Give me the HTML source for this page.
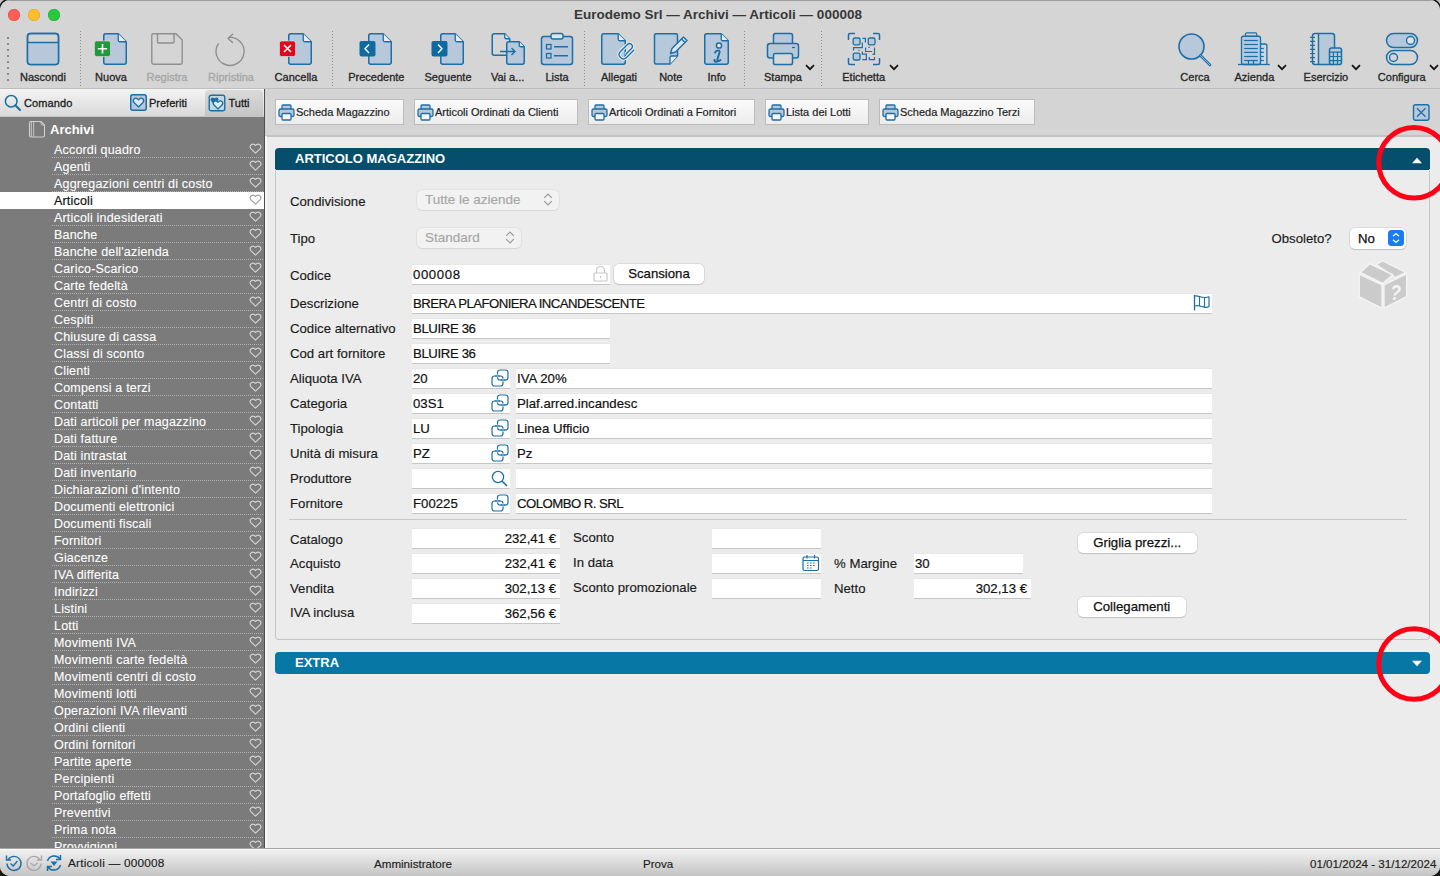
<!DOCTYPE html>
<html><head><meta charset="utf-8">
<style>
*{margin:0;padding:0;box-sizing:border-box}
html,body{width:1440px;height:876px;overflow:hidden;background:#1a1a1a}
body{font-family:"Liberation Sans",sans-serif;position:relative;color:#1e1e1e}
.a{position:absolute}
#win{position:absolute;left:0;top:0;width:1440px;height:876px;border-radius:10px;overflow:hidden;background:#ececec;box-shadow:0 0 0 1.5px #111}
#tb{left:0;top:0;width:1440px;height:89px;background:#d5d5d5;border-bottom:1px solid #bdbdbd}
#tb:before{content:"";position:absolute;left:0;top:0;right:0;height:1px;background:#9c9c9c}
.tl{width:12px;height:12px;border-radius:50%;top:9px}
.title{left:-2px;width:1440px;top:7px;text-align:center;font-weight:bold;font-size:13.5px;color:#383838;line-height:16px}
.lbl{font-size:11px;color:#262626;-webkit-text-stroke:0.3px #262626;top:70.5px;line-height:12px;text-align:center;width:100px}
.lbl.dis{-webkit-text-stroke:0.3px #a5a5a5}
.dis{color:#a5a5a5}
.sep{width:1px;border-left:2px dotted #8e8e8e}
.chev{width:9px;height:6px}
/* sidebar */
#sbh{left:0;top:89px;width:264px;height:28px;background:linear-gradient(#f4f4f4,#d9d9d9);border-bottom:1px solid #c4c4c4}
#sb{left:0;top:117px;width:264px;height:731px;background:#7b7b7b;overflow:hidden}
#sbb{left:264px;top:89px;width:1px;height:759px;background:#4e4e4e}
.row{position:absolute;left:0;width:264px;height:17px}
.row span{position:absolute;left:54px;top:2px;font-size:12.5px;color:#fff;line-height:14px;white-space:nowrap;letter-spacing:0.18px;-webkit-text-stroke:0.1px #fff}
.row i{position:absolute;left:52px;right:1px;bottom:0;height:1px;background:repeating-linear-gradient(90deg,#b2b2b2 0 1px,transparent 1px 2px)}
.row svg{position:absolute;left:248.5px;top:2px}
.row.sel{background:#fff}
.row.sel span{color:#111;-webkit-text-stroke:0.2px #111}
.row.sel i{display:none}
/* content */
#tabs{left:265px;top:89px;width:1175px;height:48px;background:#d4d4d4;border-bottom:2px solid #c3c3c3}
.tbtn{top:99px;height:26px;background:linear-gradient(#fbfbfb,#ececec);border:1px solid #bcbcbc;font-size:11px;color:#1e1e1e;line-height:24px;padding-left:20px;white-space:nowrap;-webkit-text-stroke:0.2px #1e1e1e}
.tbtn svg{position:absolute;left:2px;top:4px}
.hdr{left:275px;width:1155px;height:22px;color:#fff;font-weight:bold;font-size:13px;line-height:22px;padding-left:20px}
#box{left:275px;top:169px;width:1155px;height:471px;border:1px solid #c6c6c6;border-top:none;border-radius:0 0 4px 4px}
.L{font-size:13.2px;color:#1a1a1a;line-height:15px;white-space:nowrap;-webkit-text-stroke:0.15px #1a1a1a}
.fld{background:#fff;height:19px;box-shadow:0 1px 0 #c6c6c6,0 -0.5px 0 #e2e2e2}
.fld span{position:absolute;left:1px;top:3px;font-size:13.2px;line-height:14px;color:#111;white-space:nowrap;-webkit-text-stroke:0.2px #111}
.fld span.r{left:auto;right:4px}
.pop{height:20px;border-radius:5px;background:#f2f2f2;box-shadow:0 0 0 0.5px #d8d8d8,0 1px 1px #d4d4d4}
.btn{height:20px;border-radius:5px;background:#fff;box-shadow:0 0 0 0.5px #c8c8c8,0 1px 1px #c0c0c0;font-size:13.2px;line-height:20px;text-align:center;color:#111;-webkit-text-stroke:0.25px #111}
#status{left:0;top:848px;width:1440px;height:28px;background:linear-gradient(#f2f2f2,#c4c4c4);border-top:1px solid #a4a4a4;box-shadow:inset 0 1px 0 #fafafa}
#status .t{position:absolute;top:7.5px;font-size:11.8px;color:#1c1c1c;line-height:13px;white-space:nowrap;-webkit-text-stroke:0.15px #1c1c1c}
</style></head><body>
<div class="a" style="left:0;top:0;width:12px;height:12px;background:#c4c4c4"></div><div class="a" style="right:0;top:0;width:12px;height:12px;background:#c4c4c4"></div>
<div id="win">
<!-- TOOLBAR -->
<div id="tb" class="a">
  <div class="a tl" style="left:8px;background:#fe5f57;box-shadow:inset 0 0 0 0.5px #e0443e"></div>
  <div class="a tl" style="left:28px;background:#febc2e;box-shadow:inset 0 0 0 0.5px #dea123"></div>
  <div class="a tl" style="left:48px;background:#28c840;box-shadow:inset 0 0 0 0.5px #1aab29"></div>
  <div class="a title">Eurodemo Srl — Archivi — Articoli — 000008</div>
  <svg class="a" style="left:26px;top:32px" width="34" height="34" viewBox="0 0 34 34" ><rect x="1.5" y="1.5" width="31" height="31" rx="3" fill="none" stroke="#1b6fa6" stroke-width="1.5"/><path d="M1.5,10.5 H32.5 V30 Q32.5,32.5 30,32.5 H4 Q1.5,32.5 1.5,30 Z" fill="#b7c8da"/><rect x="1.5" y="1.5" width="31" height="31" rx="3" fill="none" stroke="#1b6fa6" stroke-width="1.5"/><line x1="1.5" y1="10.5" x2="32.5" y2="10.5" stroke="#1b6fa6" stroke-width="1.5"/></svg>
<svg class="a" style="left:94px;top:33px" width="34" height="33" viewBox="0 0 34 33" ><path d="M11.75,0.75 H24.25 L32.25,8.75 V29.25 Q32.25,31.25 30.25,31.25 H11.75 Q9.75,31.25 9.75,29.25 V2.75 Q9.75,0.75 11.75,0.75 Z" fill="#b7c8da" stroke="#1b6fa6" stroke-width="1.5" stroke-linejoin="round"/><path d="M24.25,0.75 V7.25 Q24.25,8.75 25.75,8.75 H32.25" fill="#e8ecf0" stroke="#1b6fa6" stroke-width="1.3"/><rect x="0.5" y="8" width="16" height="15.5" rx="2" fill="#1d9a3a" stroke="#e8d8e0" stroke-width="0.6"/><path d="M8.5,11 V20.5 M3.8,15.8 H13.2" stroke="#fff" stroke-width="1.6"/></svg>
<svg class="a" style="left:150px;top:32px" width="34" height="34" viewBox="0 0 34 34" ><path d="M3.5,1.8 H26 L32.2,8 V30.5 Q32.2,32.2 30.5,32.2 H3.5 Q1.8,32.2 1.8,30.5 V3.5 Q1.8,1.8 3.5,1.8 Z" fill="none" stroke="#8f8f8f" stroke-width="1.4"/><path d="M7.5,2 V10 Q7.5,11 8.5,11 H23 Q24,11 24,10 V2" fill="none" stroke="#8f8f8f" stroke-width="1.4"/></svg>
<svg class="a" style="left:214px;top:33px" width="34" height="34" viewBox="0 0 34 34" ><path d="M13.5,4.5 A14,14 0 1 1 3.5,10.5" fill="none" stroke="#8f8f8f" stroke-width="1.4" transform="translate(1,0)"/><path d="M19,0.8 L14.2,5.5 L19,10" fill="none" stroke="#8f8f8f" stroke-width="1.4"/></svg>
<svg class="a" style="left:279px;top:33px" width="34" height="33" viewBox="0 0 34 33" ><path d="M11.75,0.75 H24.25 L32.25,8.75 V29.25 Q32.25,31.25 30.25,31.25 H11.75 Q9.75,31.25 9.75,29.25 V2.75 Q9.75,0.75 11.75,0.75 Z" fill="#b7c8da" stroke="#1b6fa6" stroke-width="1.5" stroke-linejoin="round"/><path d="M24.25,0.75 V7.25 Q24.25,8.75 25.75,8.75 H32.25" fill="#e8ecf0" stroke="#1b6fa6" stroke-width="1.3"/><rect x="0.5" y="8" width="16" height="15.5" rx="2" fill="#e0061b" stroke="#d0f0f0" stroke-width="0.6"/><path d="M5,12 L12,19 M12,12 L5,19" stroke="#fff" stroke-width="1.6"/></svg>
<svg class="a" style="left:359px;top:33px" width="34" height="33" viewBox="0 0 34 33" ><path d="M11.75,0.75 H24.25 L32.25,8.75 V29.25 Q32.25,31.25 30.25,31.25 H11.75 Q9.75,31.25 9.75,29.25 V2.75 Q9.75,0.75 11.75,0.75 Z" fill="#b7c8da" stroke="#1b6fa6" stroke-width="1.5" stroke-linejoin="round"/><path d="M24.25,0.75 V7.25 Q24.25,8.75 25.75,8.75 H32.25" fill="#e8ecf0" stroke="#1b6fa6" stroke-width="1.3"/><rect x="0.5" y="8" width="16" height="15.5" rx="2" fill="#0e6aa0"/><path d="M10,11.5 L6,15.8 L10,20" fill="none" stroke="#fff" stroke-width="1.4"/></svg>
<svg class="a" style="left:431px;top:33px" width="34" height="33" viewBox="0 0 34 33" ><path d="M11.75,0.75 H24.25 L32.25,8.75 V29.25 Q32.25,31.25 30.25,31.25 H11.75 Q9.75,31.25 9.75,29.25 V2.75 Q9.75,0.75 11.75,0.75 Z" fill="#b7c8da" stroke="#1b6fa6" stroke-width="1.5" stroke-linejoin="round"/><path d="M24.25,0.75 V7.25 Q24.25,8.75 25.75,8.75 H32.25" fill="#e8ecf0" stroke="#1b6fa6" stroke-width="1.3"/><rect x="0.5" y="8" width="16" height="15.5" rx="2" fill="#0e6aa0"/><path d="M7,11.5 L11,15.8 L7,20" fill="none" stroke="#fff" stroke-width="1.4"/></svg>
<svg class="a" style="left:491px;top:32px" width="34" height="34" viewBox="0 0 34 34" ><g transform="translate(0.5,1)"><path d="M2.75,0.75 H13.25 L18.25,5.75 V20.25 Q18.25,22.25 16.25,22.25 H2.75 Q0.75,22.25 0.75,20.25 V2.75 Q0.75,0.75 2.75,0.75 Z" fill="none" stroke="#1b6fa6" stroke-width="1.5" stroke-linejoin="round"/><path d="M13.25,0.75 V4.25 Q13.25,5.75 14.75,5.75 H18.25" fill="#e8ecf0" stroke="#1b6fa6" stroke-width="1.3"/></g><g transform="translate(15,9)"><path d="M2.75,0.75 H13.25 L18.25,5.75 V21.25 Q18.25,23.25 16.25,23.25 H2.75 Q0.75,23.25 0.75,21.25 V2.75 Q0.75,0.75 2.75,0.75 Z" fill="#b7c8da" stroke="#1b6fa6" stroke-width="1.5" stroke-linejoin="round"/><path d="M13.25,0.75 V4.25 Q13.25,5.75 14.75,5.75 H18.25" fill="#e8ecf0" stroke="#1b6fa6" stroke-width="1.3"/></g><path d="M9,19.5 H24 M20.5,16 L24,19.5 L20.5,23" fill="none" stroke="#1b6fa6" stroke-width="1.4"/></svg>
<svg class="a" style="left:540px;top:32px" width="34" height="34" viewBox="0 0 34 34" ><rect x="1.5" y="4.5" width="31" height="28" rx="2.5" fill="#b7c8da" stroke="#1b6fa6" stroke-width="1.5"/><rect x="11" y="1.5" width="12" height="5.5" rx="2" fill="#dfe6ee" stroke="#1b6fa6" stroke-width="1.4"/><rect x="6.5" y="12.5" width="4.5" height="4.5" fill="none" stroke="#1b6fa6" stroke-width="1.3"/><rect x="6.5" y="21.5" width="4.5" height="4.5" fill="none" stroke="#1b6fa6" stroke-width="1.3"/><path d="M14,14.8 H28 M14,23.8 H28" stroke="#1b6fa6" stroke-width="1.4"/></svg>
<svg class="a" style="left:601px;top:32px" width="36" height="34" viewBox="0 0 36 34" ><g transform="translate(0,1)"><path d="M2.75,0.75 H17.25 L24.25,7.75 V29.25 Q24.25,31.25 22.25,31.25 H2.75 Q0.75,31.25 0.75,29.25 V2.75 Q0.75,0.75 2.75,0.75 Z" fill="#b7c8da" stroke="#1b6fa6" stroke-width="1.5" stroke-linejoin="round"/><path d="M17.25,0.75 V6.25 Q17.25,7.75 18.75,7.75 H24.25" fill="#e8ecf0" stroke="#1b6fa6" stroke-width="1.3"/></g><path d="M33,18 L25.5,25.5 Q22.5,28.5 19.5,25.5 Q16.5,22.5 19.5,19.5 L26.5,12.5 Q28.5,10.5 30.5,12.5 Q32.5,14.5 30.5,16.5 L24.5,22.5" fill="none" stroke="#e9edf1" stroke-width="3.4"/><path d="M33,18 L25.5,25.5 Q22.5,28.5 19.5,25.5 Q16.5,22.5 19.5,19.5 L26.5,12.5 Q28.5,10.5 30.5,12.5 Q32.5,14.5 30.5,16.5 L24.5,22.5" fill="none" stroke="#1b6fa6" stroke-width="1.4"/></svg>
<svg class="a" style="left:653px;top:32px" width="36" height="34" viewBox="0 0 36 34" ><path d="M3,1.8 H23 Q24.5,1.8 24.5,3.3 V24 L17,32 H3 Q1.5,32 1.5,30.5 V3.3 Q1.5,1.8 3,1.8 Z" fill="#b7c8da" stroke="#1b6fa6" stroke-width="1.5"/><path d="M17,32 V25.5 Q17,24 18.5,24 H24.5" fill="#e8ecf0" stroke="#1b6fa6" stroke-width="1.3"/><path d="M19,16.5 L30.5,5 L34,8.5 L22.5,20 L17.5,21.5 Z" fill="#dfe6ee" stroke="#1b6fa6" stroke-width="1.4" stroke-linejoin="round"/><path d="M28.5,7 L32,10.5" stroke="#1b6fa6" stroke-width="1.2"/></svg>
<svg class="a" style="left:704px;top:32px" width="26" height="34" viewBox="0 0 26 34" ><g transform="translate(0,1)"><path d="M2.75,0.75 H17.25 L24.25,7.75 V29.25 Q24.25,31.25 22.25,31.25 H2.75 Q0.75,31.25 0.75,29.25 V2.75 Q0.75,0.75 2.75,0.75 Z" fill="#b7c8da" stroke="#1b6fa6" stroke-width="1.5" stroke-linejoin="round"/><path d="M17.25,0.75 V6.25 Q17.25,7.75 18.75,7.75 H24.25" fill="#e8ecf0" stroke="#1b6fa6" stroke-width="1.3"/></g><circle cx="15" cy="13.5" r="2.6" fill="#e8ecf0" stroke="#1b6fa6" stroke-width="1.5"/><path d="M11,20.5 Q12,18.5 14,18.5 Q16,18.5 15.5,20.5 L13.5,27 Q13,29.5 15,29 L16.5,28 M13,29.5 Q10.5,30.5 10.5,28" fill="none" stroke="#1b6fa6" stroke-width="2" stroke-linejoin="round" stroke-linecap="round"/></svg>
<svg class="a" style="left:766px;top:32px" width="34" height="34" viewBox="0 0 34 34" ><rect x="7.5" y="1.5" width="19" height="11" rx="2" fill="#b7c8da" stroke="#1b6fa6" stroke-width="1.5"/><rect x="1.5" y="11.5" width="31" height="14.5" rx="2.5" fill="#b7c8da" stroke="#1b6fa6" stroke-width="1.5"/><rect x="7.5" y="21.5" width="19" height="11" rx="1.8" fill="#d8d8d8" stroke="#1b6fa6" stroke-width="1.5"/><path d="M26,15.5 H29" stroke="#1b6fa6" stroke-width="1.3"/></svg>
<svg class="a" style="left:847px;top:32px" width="34" height="34" viewBox="0 0 34 34" ><path d="M1.5,8 V3 Q1.5,1.5 3,1.5 H8 M26,1.5 H31 Q32.5,1.5 32.5,3 V8 M32.5,26 V31 Q32.5,32.5 31,32.5 H26 M8,32.5 H3 Q1.5,32.5 1.5,31 V26" fill="none" stroke="#1b6fa6" stroke-width="1.5"/><rect x="6.2" y="6" width="6.8" height="6.8" rx="1.6" fill="#b7c8da" stroke="#1b6fa6" stroke-width="1.3"/><rect x="21.2" y="6" width="6.8" height="6.8" rx="1.6" fill="#b7c8da" stroke="#1b6fa6" stroke-width="1.3"/><rect x="6.2" y="21.2" width="6.8" height="6.8" rx="1.6" fill="#b7c8da" stroke="#1b6fa6" stroke-width="1.3"/><path d="M15.5,6.3 H18.4 V10.4 M15.3,10.4 V15.6 H6.5 V18.5 M18.6,15.4 V19.5 H25.1 M27.5,15.4 V22.4 H25.4 M15.3,19.5 V22.1 H19.4 V27.6 H15.3 M22.3,25 V27.6 H27.5 V25" fill="none" stroke="#1b6fa6" stroke-width="1.2"/><path d="M11.3,18.3 h1.3 M21.3,15.4 h1.3" stroke="#1b6fa6" stroke-width="1.2"/></svg>
<svg class="a" style="left:1177px;top:32px" width="36" height="35" viewBox="0 0 36 35" ><circle cx="14.5" cy="14.5" r="12.5" fill="#b7c8da" stroke="#1b6fa6" stroke-width="1.6"/><path d="M23.5,23.5 L33,33" stroke="#1b6fa6" stroke-width="2.6" stroke-linecap="round"/><path d="M23.5,23.5 L33,33" stroke="#b7c8da" stroke-width="0.8" stroke-linecap="round"/></svg>
<svg class="a" style="left:1237px;top:32px" width="35" height="34" viewBox="0 0 35 34" ><rect x="4.5" y="4.25" width="19" height="28.25" rx="2" fill="#b7c8da" stroke="#1b6fa6" stroke-width="1.3"/><rect x="8.3" y="0.9" width="11.5" height="3.4" rx="1.5" fill="none" stroke="#1b6fa6" stroke-width="1.2"/><path d="M23.7,12 H28 Q29.9,12 29.9,14 V32.5" fill="none" stroke="#1b6fa6" stroke-width="1.3"/><path d="M1,32.5 H32.8" stroke="#1b6fa6" stroke-width="1.3"/><path d="M7.1,8.5 H20.8" stroke="#1b6fa6" stroke-width="1.2"/><path d="M7.1,12.5 H20.8" stroke="#1b6fa6" stroke-width="1.2"/><path d="M7.1,16.5 H20.8" stroke="#1b6fa6" stroke-width="1.2"/><path d="M7.1,20.4 H20.8" stroke="#1b6fa6" stroke-width="1.2"/><path d="M7.1,24.5 H20.8" stroke="#1b6fa6" stroke-width="1.2"/><path d="M7.1,28.5 H20.8" stroke="#1b6fa6" stroke-width="1.2"/><path d="M23.7,16.5 H26.8" stroke="#1b6fa6" stroke-width="1.2"/><path d="M23.7,20.4 H26.8" stroke="#1b6fa6" stroke-width="1.2"/><path d="M23.7,24.5 H26.8" stroke="#1b6fa6" stroke-width="1.2"/><path d="M23.7,28.5 H26.8" stroke="#1b6fa6" stroke-width="1.2"/><path d="M11.5,28.5 V32.5 M16.5,28.5 V32.5" stroke="#1b6fa6" stroke-width="1.2"/></svg>
<svg class="a" style="left:1309px;top:32px" width="35" height="35" viewBox="0 0 35 35" ><path d="M9.5,1.5 H23.5 Q25.5,1.5 25.5,3.5 V30.5 Q25.5,32.5 23.5,32.5 H9.5 Z" fill="#b7c8da"/><rect x="3.5" y="1.5" width="22" height="31" rx="2.5" fill="none" stroke="#1b6fa6" stroke-width="1.5"/><path d="M9.5,1.5 V32.5" stroke="#1b6fa6" stroke-width="1.4"/><path d="M1,5.3 H6" stroke="#1b6fa6" stroke-width="1.2"/><path d="M1,9.35 H6" stroke="#1b6fa6" stroke-width="1.2"/><path d="M1,13.4 H6" stroke="#1b6fa6" stroke-width="1.2"/><path d="M1,17.45 H6" stroke="#1b6fa6" stroke-width="1.2"/><path d="M1,21.5 H6" stroke="#1b6fa6" stroke-width="1.2"/><path d="M1,25.55 H6" stroke="#1b6fa6" stroke-width="1.2"/><path d="M1,29.6 H6" stroke="#1b6fa6" stroke-width="1.2"/><rect x="20.5" y="16" width="12" height="16.5" rx="2" fill="#b7c8da" stroke="#1b6fa6" stroke-width="1.5"/><path d="M20.5,20.2 H32.5 M20.5,24.5 H32.5 M20.5,28.6 H32.5 M24.4,20.2 V32.5 M28.5,20.2 V32.5" stroke="#1b6fa6" stroke-width="1.2"/></svg>
<svg class="a" style="left:1385px;top:32px" width="35" height="35" viewBox="0 0 35 35" ><rect x="1.5" y="1.5" width="31" height="14" rx="7" fill="#b7c8da" stroke="#1b6fa6" stroke-width="1.5"/><circle cx="25.5" cy="8.5" r="4" fill="#dde3ea" stroke="#1b6fa6" stroke-width="1.4"/><rect x="1.5" y="18.5" width="31" height="14" rx="7" fill="none" stroke="#1b6fa6" stroke-width="1.5"/><circle cx="8.5" cy="25.5" r="4" fill="none" stroke="#1b6fa6" stroke-width="1.4"/></svg>
<svg class="a" style="left:804.7px;top:63.5px" width="10" height="7" viewBox="0 0 10 7" ><path d="M1,1.2 L5,5.2 L9,1.2" fill="none" stroke="#111" stroke-width="1.7"/></svg>
<svg class="a" style="left:888.6px;top:63.5px" width="10" height="7" viewBox="0 0 10 7" ><path d="M1,1.2 L5,5.2 L9,1.2" fill="none" stroke="#111" stroke-width="1.7"/></svg>
<svg class="a" style="left:1276.7px;top:63.5px" width="10" height="7" viewBox="0 0 10 7" ><path d="M1,1.2 L5,5.2 L9,1.2" fill="none" stroke="#111" stroke-width="1.7"/></svg>
<svg class="a" style="left:1350.8px;top:63.5px" width="10" height="7" viewBox="0 0 10 7" ><path d="M1,1.2 L5,5.2 L9,1.2" fill="none" stroke="#111" stroke-width="1.7"/></svg>
<svg class="a" style="left:1429.4px;top:63.5px" width="10" height="7" viewBox="0 0 10 7" ><path d="M1,1.2 L5,5.2 L9,1.2" fill="none" stroke="#111" stroke-width="1.7"/></svg>
<div class="a" style="left:7px;top:37px;width:2px;height:46px;background:repeating-linear-gradient(#8a8a8a 0 2px,transparent 2px 6px)"></div>
<div class="a" style="left:80px;top:31px;width:1px;height:56px;background:repeating-linear-gradient(#8f8f8f 0 1px,transparent 1px 3px)"></div>
<div class="a" style="left:332px;top:31px;width:1px;height:56px;background:repeating-linear-gradient(#8f8f8f 0 1px,transparent 1px 3px)"></div>
<div class="a" style="left:584px;top:31px;width:1px;height:56px;background:repeating-linear-gradient(#8f8f8f 0 1px,transparent 1px 3px)"></div>
<div class="a" style="left:744px;top:31px;width:1px;height:56px;background:repeating-linear-gradient(#8f8f8f 0 1px,transparent 1px 3px)"></div>
<div class="a" style="left:821px;top:31px;width:1px;height:56px;background:repeating-linear-gradient(#8f8f8f 0 1px,transparent 1px 3px)"></div>
<div class="a lbl" style="left:-7px">Nascondi</div>
<div class="a lbl" style="left:61px">Nuova</div>
<div class="a lbl dis" style="left:117px">Registra</div>
<div class="a lbl dis" style="left:181px">Ripristina</div>
<div class="a lbl" style="left:246px">Cancella</div>
<div class="a lbl" style="left:326.3px">Precedente</div>
<div class="a lbl" style="left:398px">Seguente</div>
<div class="a lbl" style="left:457.6px">Vai a...</div>
<div class="a lbl" style="left:507px">Lista</div>
<div class="a lbl" style="left:569px">Allegati</div>
<div class="a lbl" style="left:620.8px">Note</div>
<div class="a lbl" style="left:666.7px">Info</div>
<div class="a lbl" style="left:733px">Stampa</div>
<div class="a lbl" style="left:813.7px">Etichetta</div>
<div class="a lbl" style="left:1145px">Cerca</div>
<div class="a lbl" style="left:1204.4px">Azienda</div>
<div class="a lbl" style="left:1275.9px">Esercizio</div>
<div class="a lbl" style="left:1351.7px">Configura</div>
</div>
<!-- SIDEBAR -->
<div id="sbh" class="a"><svg class="a" style="left:4px;top:5px" width="18" height="18"><circle cx="7.2" cy="7.2" r="5.8" fill="none" stroke="#1b6fa6" stroke-width="1.5"/><path d="M11.3,11.3 L16,16" stroke="#1b6fa6" stroke-width="2" stroke-linecap="round"/></svg>
<div class="a" style="left:24px;top:8px;font-size:11px;color:#1a1a1a;line-height:12px;-webkit-text-stroke:0.3px #1a1a1a;letter-spacing:0.1px">Comando</div>
<svg class="a" style="left:130px;top:5px" width="17" height="17"><rect x="0.75" y="0.75" width="15.5" height="15.5" rx="2" fill="#b7c8da" stroke="#1b6fa6" stroke-width="1.5"/><path d="M8.5,13 L4,8.5 Q2.5,6.5 4,5 Q5.8,3.3 7.6,5 L8.5,5.9 L9.4,5 Q11.2,3.3 13,5 Q14.5,6.5 13,8.5 Z" fill="#dfe7ef" stroke="#1b6fa6" stroke-width="1.3" stroke-linejoin="round"/></svg>
<div class="a" style="left:149px;top:8px;font-size:11px;color:#1a1a1a;line-height:12px;-webkit-text-stroke:0.3px #1a1a1a">Preferiti</div>
<div class="a" style="left:205px;top:1px;width:58px;height:27px;background:linear-gradient(#dadada,#c4c4c4);border-radius:4px 4px 0 0"></div>
<svg class="a" style="left:208px;top:5px" width="18" height="18"><rect x="1.25" y="1.25" width="15.5" height="15.5" rx="2" fill="#c9d6e3" stroke="#1b6fa6" stroke-width="1.4"/><path d="M6.5,10.5 L3,7 Q1.8,5.3 3.2,4 Q4.6,2.8 6,4 L6.5,4.5 L7,4 Q8.4,2.8 9.8,4 Q11.2,5.3 10,7 Z" fill="#1b6fa6"/><path d="M10,15 L5.8,10.8 Q4.5,9 6,7.6 Q7.6,6.2 9.2,7.6 L10,8.4 L10.8,7.6 Q12.4,6.2 14,7.6 Q15.5,9 14.2,10.8 Z" fill="#e4ebf2" stroke="#1b6fa6" stroke-width="1.3" stroke-linejoin="round"/></svg>
<div class="a" style="left:228.5px;top:8px;font-size:11px;color:#1a1a1a;line-height:12px;-webkit-text-stroke:0.3px #1a1a1a">Tutti</div></div>
<div id="sb" class="a"><svg class="a" style="left:28px;top:3px" width="18" height="19"><path d="M1.5,3 Q1.5,1.5 3,1.5 H13 L16.5,5 V15.5 Q16.5,17 15,17 H3 Q1.5,17 1.5,15.5 Z" fill="none" stroke="#d0d0d0" stroke-width="1.1"/><path d="M3.3,1.8 V16.8 M5.7,1.8 V16.8" stroke="#d0d0d0" stroke-width="0.9"/><path d="M13,1.5 V3.5 Q13,5 14.5,5 H16.5" fill="none" stroke="#d0d0d0" stroke-width="0.9"/></svg>
<div class="a" style="left:50px;top:5px;font-size:13px;font-weight:bold;color:#fff;line-height:15px">Archivi</div>
<div class="row" style="top:24px"><span>Accordi quadro</span><i></i><svg width="13" height="12"><path d="M6,9.6 L1.3,5.1 Q0.1,3.6 0.9,2.1 Q2.1,0.3 4.2,0.7 Q5.2,1 6,2 Q6.8,1 7.8,0.7 Q9.9,0.3 11.1,2.1 Q11.9,3.6 10.7,5.1 Z" transform="translate(0.5,0.5)" fill="none" stroke="#d6d6d6" stroke-width="1.1" stroke-linejoin="round"/></svg></div>
<div class="row" style="top:41px"><span>Agenti</span><i></i><svg width="13" height="12"><path d="M6,9.6 L1.3,5.1 Q0.1,3.6 0.9,2.1 Q2.1,0.3 4.2,0.7 Q5.2,1 6,2 Q6.8,1 7.8,0.7 Q9.9,0.3 11.1,2.1 Q11.9,3.6 10.7,5.1 Z" transform="translate(0.5,0.5)" fill="none" stroke="#d6d6d6" stroke-width="1.1" stroke-linejoin="round"/></svg></div>
<div class="row" style="top:58px"><span>Aggregazioni centri di costo</span><i></i><svg width="13" height="12"><path d="M6,9.6 L1.3,5.1 Q0.1,3.6 0.9,2.1 Q2.1,0.3 4.2,0.7 Q5.2,1 6,2 Q6.8,1 7.8,0.7 Q9.9,0.3 11.1,2.1 Q11.9,3.6 10.7,5.1 Z" transform="translate(0.5,0.5)" fill="none" stroke="#d6d6d6" stroke-width="1.1" stroke-linejoin="round"/></svg></div>
<div class="row sel" style="top:75px"><span>Articoli</span><i></i><svg width="13" height="12"><path d="M6,9.6 L1.3,5.1 Q0.1,3.6 0.9,2.1 Q2.1,0.3 4.2,0.7 Q5.2,1 6,2 Q6.8,1 7.8,0.7 Q9.9,0.3 11.1,2.1 Q11.9,3.6 10.7,5.1 Z" transform="translate(0.5,0.5)" fill="none" stroke="#9a9a9a" stroke-width="1.1" stroke-linejoin="round"/></svg></div>
<div class="row" style="top:92px"><span>Articoli indesiderati</span><i></i><svg width="13" height="12"><path d="M6,9.6 L1.3,5.1 Q0.1,3.6 0.9,2.1 Q2.1,0.3 4.2,0.7 Q5.2,1 6,2 Q6.8,1 7.8,0.7 Q9.9,0.3 11.1,2.1 Q11.9,3.6 10.7,5.1 Z" transform="translate(0.5,0.5)" fill="none" stroke="#d6d6d6" stroke-width="1.1" stroke-linejoin="round"/></svg></div>
<div class="row" style="top:109px"><span>Banche</span><i></i><svg width="13" height="12"><path d="M6,9.6 L1.3,5.1 Q0.1,3.6 0.9,2.1 Q2.1,0.3 4.2,0.7 Q5.2,1 6,2 Q6.8,1 7.8,0.7 Q9.9,0.3 11.1,2.1 Q11.9,3.6 10.7,5.1 Z" transform="translate(0.5,0.5)" fill="none" stroke="#d6d6d6" stroke-width="1.1" stroke-linejoin="round"/></svg></div>
<div class="row" style="top:126px"><span>Banche dell'azienda</span><i></i><svg width="13" height="12"><path d="M6,9.6 L1.3,5.1 Q0.1,3.6 0.9,2.1 Q2.1,0.3 4.2,0.7 Q5.2,1 6,2 Q6.8,1 7.8,0.7 Q9.9,0.3 11.1,2.1 Q11.9,3.6 10.7,5.1 Z" transform="translate(0.5,0.5)" fill="none" stroke="#d6d6d6" stroke-width="1.1" stroke-linejoin="round"/></svg></div>
<div class="row" style="top:143px"><span>Carico-Scarico</span><i></i><svg width="13" height="12"><path d="M6,9.6 L1.3,5.1 Q0.1,3.6 0.9,2.1 Q2.1,0.3 4.2,0.7 Q5.2,1 6,2 Q6.8,1 7.8,0.7 Q9.9,0.3 11.1,2.1 Q11.9,3.6 10.7,5.1 Z" transform="translate(0.5,0.5)" fill="none" stroke="#d6d6d6" stroke-width="1.1" stroke-linejoin="round"/></svg></div>
<div class="row" style="top:160px"><span>Carte fedeltà</span><i></i><svg width="13" height="12"><path d="M6,9.6 L1.3,5.1 Q0.1,3.6 0.9,2.1 Q2.1,0.3 4.2,0.7 Q5.2,1 6,2 Q6.8,1 7.8,0.7 Q9.9,0.3 11.1,2.1 Q11.9,3.6 10.7,5.1 Z" transform="translate(0.5,0.5)" fill="none" stroke="#d6d6d6" stroke-width="1.1" stroke-linejoin="round"/></svg></div>
<div class="row" style="top:177px"><span>Centri di costo</span><i></i><svg width="13" height="12"><path d="M6,9.6 L1.3,5.1 Q0.1,3.6 0.9,2.1 Q2.1,0.3 4.2,0.7 Q5.2,1 6,2 Q6.8,1 7.8,0.7 Q9.9,0.3 11.1,2.1 Q11.9,3.6 10.7,5.1 Z" transform="translate(0.5,0.5)" fill="none" stroke="#d6d6d6" stroke-width="1.1" stroke-linejoin="round"/></svg></div>
<div class="row" style="top:194px"><span>Cespiti</span><i></i><svg width="13" height="12"><path d="M6,9.6 L1.3,5.1 Q0.1,3.6 0.9,2.1 Q2.1,0.3 4.2,0.7 Q5.2,1 6,2 Q6.8,1 7.8,0.7 Q9.9,0.3 11.1,2.1 Q11.9,3.6 10.7,5.1 Z" transform="translate(0.5,0.5)" fill="none" stroke="#d6d6d6" stroke-width="1.1" stroke-linejoin="round"/></svg></div>
<div class="row" style="top:211px"><span>Chiusure di cassa</span><i></i><svg width="13" height="12"><path d="M6,9.6 L1.3,5.1 Q0.1,3.6 0.9,2.1 Q2.1,0.3 4.2,0.7 Q5.2,1 6,2 Q6.8,1 7.8,0.7 Q9.9,0.3 11.1,2.1 Q11.9,3.6 10.7,5.1 Z" transform="translate(0.5,0.5)" fill="none" stroke="#d6d6d6" stroke-width="1.1" stroke-linejoin="round"/></svg></div>
<div class="row" style="top:228px"><span>Classi di sconto</span><i></i><svg width="13" height="12"><path d="M6,9.6 L1.3,5.1 Q0.1,3.6 0.9,2.1 Q2.1,0.3 4.2,0.7 Q5.2,1 6,2 Q6.8,1 7.8,0.7 Q9.9,0.3 11.1,2.1 Q11.9,3.6 10.7,5.1 Z" transform="translate(0.5,0.5)" fill="none" stroke="#d6d6d6" stroke-width="1.1" stroke-linejoin="round"/></svg></div>
<div class="row" style="top:245px"><span>Clienti</span><i></i><svg width="13" height="12"><path d="M6,9.6 L1.3,5.1 Q0.1,3.6 0.9,2.1 Q2.1,0.3 4.2,0.7 Q5.2,1 6,2 Q6.8,1 7.8,0.7 Q9.9,0.3 11.1,2.1 Q11.9,3.6 10.7,5.1 Z" transform="translate(0.5,0.5)" fill="none" stroke="#d6d6d6" stroke-width="1.1" stroke-linejoin="round"/></svg></div>
<div class="row" style="top:262px"><span>Compensi a terzi</span><i></i><svg width="13" height="12"><path d="M6,9.6 L1.3,5.1 Q0.1,3.6 0.9,2.1 Q2.1,0.3 4.2,0.7 Q5.2,1 6,2 Q6.8,1 7.8,0.7 Q9.9,0.3 11.1,2.1 Q11.9,3.6 10.7,5.1 Z" transform="translate(0.5,0.5)" fill="none" stroke="#d6d6d6" stroke-width="1.1" stroke-linejoin="round"/></svg></div>
<div class="row" style="top:279px"><span>Contatti</span><i></i><svg width="13" height="12"><path d="M6,9.6 L1.3,5.1 Q0.1,3.6 0.9,2.1 Q2.1,0.3 4.2,0.7 Q5.2,1 6,2 Q6.8,1 7.8,0.7 Q9.9,0.3 11.1,2.1 Q11.9,3.6 10.7,5.1 Z" transform="translate(0.5,0.5)" fill="none" stroke="#d6d6d6" stroke-width="1.1" stroke-linejoin="round"/></svg></div>
<div class="row" style="top:296px"><span>Dati articoli per magazzino</span><i></i><svg width="13" height="12"><path d="M6,9.6 L1.3,5.1 Q0.1,3.6 0.9,2.1 Q2.1,0.3 4.2,0.7 Q5.2,1 6,2 Q6.8,1 7.8,0.7 Q9.9,0.3 11.1,2.1 Q11.9,3.6 10.7,5.1 Z" transform="translate(0.5,0.5)" fill="none" stroke="#d6d6d6" stroke-width="1.1" stroke-linejoin="round"/></svg></div>
<div class="row" style="top:313px"><span>Dati fatture</span><i></i><svg width="13" height="12"><path d="M6,9.6 L1.3,5.1 Q0.1,3.6 0.9,2.1 Q2.1,0.3 4.2,0.7 Q5.2,1 6,2 Q6.8,1 7.8,0.7 Q9.9,0.3 11.1,2.1 Q11.9,3.6 10.7,5.1 Z" transform="translate(0.5,0.5)" fill="none" stroke="#d6d6d6" stroke-width="1.1" stroke-linejoin="round"/></svg></div>
<div class="row" style="top:330px"><span>Dati intrastat</span><i></i><svg width="13" height="12"><path d="M6,9.6 L1.3,5.1 Q0.1,3.6 0.9,2.1 Q2.1,0.3 4.2,0.7 Q5.2,1 6,2 Q6.8,1 7.8,0.7 Q9.9,0.3 11.1,2.1 Q11.9,3.6 10.7,5.1 Z" transform="translate(0.5,0.5)" fill="none" stroke="#d6d6d6" stroke-width="1.1" stroke-linejoin="round"/></svg></div>
<div class="row" style="top:347px"><span>Dati inventario</span><i></i><svg width="13" height="12"><path d="M6,9.6 L1.3,5.1 Q0.1,3.6 0.9,2.1 Q2.1,0.3 4.2,0.7 Q5.2,1 6,2 Q6.8,1 7.8,0.7 Q9.9,0.3 11.1,2.1 Q11.9,3.6 10.7,5.1 Z" transform="translate(0.5,0.5)" fill="none" stroke="#d6d6d6" stroke-width="1.1" stroke-linejoin="round"/></svg></div>
<div class="row" style="top:364px"><span>Dichiarazioni d'intento</span><i></i><svg width="13" height="12"><path d="M6,9.6 L1.3,5.1 Q0.1,3.6 0.9,2.1 Q2.1,0.3 4.2,0.7 Q5.2,1 6,2 Q6.8,1 7.8,0.7 Q9.9,0.3 11.1,2.1 Q11.9,3.6 10.7,5.1 Z" transform="translate(0.5,0.5)" fill="none" stroke="#d6d6d6" stroke-width="1.1" stroke-linejoin="round"/></svg></div>
<div class="row" style="top:381px"><span>Documenti elettronici</span><i></i><svg width="13" height="12"><path d="M6,9.6 L1.3,5.1 Q0.1,3.6 0.9,2.1 Q2.1,0.3 4.2,0.7 Q5.2,1 6,2 Q6.8,1 7.8,0.7 Q9.9,0.3 11.1,2.1 Q11.9,3.6 10.7,5.1 Z" transform="translate(0.5,0.5)" fill="none" stroke="#d6d6d6" stroke-width="1.1" stroke-linejoin="round"/></svg></div>
<div class="row" style="top:398px"><span>Documenti fiscali</span><i></i><svg width="13" height="12"><path d="M6,9.6 L1.3,5.1 Q0.1,3.6 0.9,2.1 Q2.1,0.3 4.2,0.7 Q5.2,1 6,2 Q6.8,1 7.8,0.7 Q9.9,0.3 11.1,2.1 Q11.9,3.6 10.7,5.1 Z" transform="translate(0.5,0.5)" fill="none" stroke="#d6d6d6" stroke-width="1.1" stroke-linejoin="round"/></svg></div>
<div class="row" style="top:415px"><span>Fornitori</span><i></i><svg width="13" height="12"><path d="M6,9.6 L1.3,5.1 Q0.1,3.6 0.9,2.1 Q2.1,0.3 4.2,0.7 Q5.2,1 6,2 Q6.8,1 7.8,0.7 Q9.9,0.3 11.1,2.1 Q11.9,3.6 10.7,5.1 Z" transform="translate(0.5,0.5)" fill="none" stroke="#d6d6d6" stroke-width="1.1" stroke-linejoin="round"/></svg></div>
<div class="row" style="top:432px"><span>Giacenze</span><i></i><svg width="13" height="12"><path d="M6,9.6 L1.3,5.1 Q0.1,3.6 0.9,2.1 Q2.1,0.3 4.2,0.7 Q5.2,1 6,2 Q6.8,1 7.8,0.7 Q9.9,0.3 11.1,2.1 Q11.9,3.6 10.7,5.1 Z" transform="translate(0.5,0.5)" fill="none" stroke="#d6d6d6" stroke-width="1.1" stroke-linejoin="round"/></svg></div>
<div class="row" style="top:449px"><span>IVA differita</span><i></i><svg width="13" height="12"><path d="M6,9.6 L1.3,5.1 Q0.1,3.6 0.9,2.1 Q2.1,0.3 4.2,0.7 Q5.2,1 6,2 Q6.8,1 7.8,0.7 Q9.9,0.3 11.1,2.1 Q11.9,3.6 10.7,5.1 Z" transform="translate(0.5,0.5)" fill="none" stroke="#d6d6d6" stroke-width="1.1" stroke-linejoin="round"/></svg></div>
<div class="row" style="top:466px"><span>Indirizzi</span><i></i><svg width="13" height="12"><path d="M6,9.6 L1.3,5.1 Q0.1,3.6 0.9,2.1 Q2.1,0.3 4.2,0.7 Q5.2,1 6,2 Q6.8,1 7.8,0.7 Q9.9,0.3 11.1,2.1 Q11.9,3.6 10.7,5.1 Z" transform="translate(0.5,0.5)" fill="none" stroke="#d6d6d6" stroke-width="1.1" stroke-linejoin="round"/></svg></div>
<div class="row" style="top:483px"><span>Listini</span><i></i><svg width="13" height="12"><path d="M6,9.6 L1.3,5.1 Q0.1,3.6 0.9,2.1 Q2.1,0.3 4.2,0.7 Q5.2,1 6,2 Q6.8,1 7.8,0.7 Q9.9,0.3 11.1,2.1 Q11.9,3.6 10.7,5.1 Z" transform="translate(0.5,0.5)" fill="none" stroke="#d6d6d6" stroke-width="1.1" stroke-linejoin="round"/></svg></div>
<div class="row" style="top:500px"><span>Lotti</span><i></i><svg width="13" height="12"><path d="M6,9.6 L1.3,5.1 Q0.1,3.6 0.9,2.1 Q2.1,0.3 4.2,0.7 Q5.2,1 6,2 Q6.8,1 7.8,0.7 Q9.9,0.3 11.1,2.1 Q11.9,3.6 10.7,5.1 Z" transform="translate(0.5,0.5)" fill="none" stroke="#d6d6d6" stroke-width="1.1" stroke-linejoin="round"/></svg></div>
<div class="row" style="top:517px"><span>Movimenti IVA</span><i></i><svg width="13" height="12"><path d="M6,9.6 L1.3,5.1 Q0.1,3.6 0.9,2.1 Q2.1,0.3 4.2,0.7 Q5.2,1 6,2 Q6.8,1 7.8,0.7 Q9.9,0.3 11.1,2.1 Q11.9,3.6 10.7,5.1 Z" transform="translate(0.5,0.5)" fill="none" stroke="#d6d6d6" stroke-width="1.1" stroke-linejoin="round"/></svg></div>
<div class="row" style="top:534px"><span>Movimenti carte fedeltà</span><i></i><svg width="13" height="12"><path d="M6,9.6 L1.3,5.1 Q0.1,3.6 0.9,2.1 Q2.1,0.3 4.2,0.7 Q5.2,1 6,2 Q6.8,1 7.8,0.7 Q9.9,0.3 11.1,2.1 Q11.9,3.6 10.7,5.1 Z" transform="translate(0.5,0.5)" fill="none" stroke="#d6d6d6" stroke-width="1.1" stroke-linejoin="round"/></svg></div>
<div class="row" style="top:551px"><span>Movimenti centri di costo</span><i></i><svg width="13" height="12"><path d="M6,9.6 L1.3,5.1 Q0.1,3.6 0.9,2.1 Q2.1,0.3 4.2,0.7 Q5.2,1 6,2 Q6.8,1 7.8,0.7 Q9.9,0.3 11.1,2.1 Q11.9,3.6 10.7,5.1 Z" transform="translate(0.5,0.5)" fill="none" stroke="#d6d6d6" stroke-width="1.1" stroke-linejoin="round"/></svg></div>
<div class="row" style="top:568px"><span>Movimenti lotti</span><i></i><svg width="13" height="12"><path d="M6,9.6 L1.3,5.1 Q0.1,3.6 0.9,2.1 Q2.1,0.3 4.2,0.7 Q5.2,1 6,2 Q6.8,1 7.8,0.7 Q9.9,0.3 11.1,2.1 Q11.9,3.6 10.7,5.1 Z" transform="translate(0.5,0.5)" fill="none" stroke="#d6d6d6" stroke-width="1.1" stroke-linejoin="round"/></svg></div>
<div class="row" style="top:585px"><span>Operazioni IVA rilevanti</span><i></i><svg width="13" height="12"><path d="M6,9.6 L1.3,5.1 Q0.1,3.6 0.9,2.1 Q2.1,0.3 4.2,0.7 Q5.2,1 6,2 Q6.8,1 7.8,0.7 Q9.9,0.3 11.1,2.1 Q11.9,3.6 10.7,5.1 Z" transform="translate(0.5,0.5)" fill="none" stroke="#d6d6d6" stroke-width="1.1" stroke-linejoin="round"/></svg></div>
<div class="row" style="top:602px"><span>Ordini clienti</span><i></i><svg width="13" height="12"><path d="M6,9.6 L1.3,5.1 Q0.1,3.6 0.9,2.1 Q2.1,0.3 4.2,0.7 Q5.2,1 6,2 Q6.8,1 7.8,0.7 Q9.9,0.3 11.1,2.1 Q11.9,3.6 10.7,5.1 Z" transform="translate(0.5,0.5)" fill="none" stroke="#d6d6d6" stroke-width="1.1" stroke-linejoin="round"/></svg></div>
<div class="row" style="top:619px"><span>Ordini fornitori</span><i></i><svg width="13" height="12"><path d="M6,9.6 L1.3,5.1 Q0.1,3.6 0.9,2.1 Q2.1,0.3 4.2,0.7 Q5.2,1 6,2 Q6.8,1 7.8,0.7 Q9.9,0.3 11.1,2.1 Q11.9,3.6 10.7,5.1 Z" transform="translate(0.5,0.5)" fill="none" stroke="#d6d6d6" stroke-width="1.1" stroke-linejoin="round"/></svg></div>
<div class="row" style="top:636px"><span>Partite aperte</span><i></i><svg width="13" height="12"><path d="M6,9.6 L1.3,5.1 Q0.1,3.6 0.9,2.1 Q2.1,0.3 4.2,0.7 Q5.2,1 6,2 Q6.8,1 7.8,0.7 Q9.9,0.3 11.1,2.1 Q11.9,3.6 10.7,5.1 Z" transform="translate(0.5,0.5)" fill="none" stroke="#d6d6d6" stroke-width="1.1" stroke-linejoin="round"/></svg></div>
<div class="row" style="top:653px"><span>Percipienti</span><i></i><svg width="13" height="12"><path d="M6,9.6 L1.3,5.1 Q0.1,3.6 0.9,2.1 Q2.1,0.3 4.2,0.7 Q5.2,1 6,2 Q6.8,1 7.8,0.7 Q9.9,0.3 11.1,2.1 Q11.9,3.6 10.7,5.1 Z" transform="translate(0.5,0.5)" fill="none" stroke="#d6d6d6" stroke-width="1.1" stroke-linejoin="round"/></svg></div>
<div class="row" style="top:670px"><span>Portafoglio effetti</span><i></i><svg width="13" height="12"><path d="M6,9.6 L1.3,5.1 Q0.1,3.6 0.9,2.1 Q2.1,0.3 4.2,0.7 Q5.2,1 6,2 Q6.8,1 7.8,0.7 Q9.9,0.3 11.1,2.1 Q11.9,3.6 10.7,5.1 Z" transform="translate(0.5,0.5)" fill="none" stroke="#d6d6d6" stroke-width="1.1" stroke-linejoin="round"/></svg></div>
<div class="row" style="top:687px"><span>Preventivi</span><i></i><svg width="13" height="12"><path d="M6,9.6 L1.3,5.1 Q0.1,3.6 0.9,2.1 Q2.1,0.3 4.2,0.7 Q5.2,1 6,2 Q6.8,1 7.8,0.7 Q9.9,0.3 11.1,2.1 Q11.9,3.6 10.7,5.1 Z" transform="translate(0.5,0.5)" fill="none" stroke="#d6d6d6" stroke-width="1.1" stroke-linejoin="round"/></svg></div>
<div class="row" style="top:704px"><span>Prima nota</span><i></i><svg width="13" height="12"><path d="M6,9.6 L1.3,5.1 Q0.1,3.6 0.9,2.1 Q2.1,0.3 4.2,0.7 Q5.2,1 6,2 Q6.8,1 7.8,0.7 Q9.9,0.3 11.1,2.1 Q11.9,3.6 10.7,5.1 Z" transform="translate(0.5,0.5)" fill="none" stroke="#d6d6d6" stroke-width="1.1" stroke-linejoin="round"/></svg></div>
<div class="row" style="top:721px"><span>Provvigioni</span><i></i><svg width="13" height="12"><path d="M6,9.6 L1.3,5.1 Q0.1,3.6 0.9,2.1 Q2.1,0.3 4.2,0.7 Q5.2,1 6,2 Q6.8,1 7.8,0.7 Q9.9,0.3 11.1,2.1 Q11.9,3.6 10.7,5.1 Z" transform="translate(0.5,0.5)" fill="none" stroke="#d6d6d6" stroke-width="1.1" stroke-linejoin="round"/></svg></div></div>
<div id="sbb" class="a"></div>
<!-- TABS -->
<div id="tabs" class="a"></div>
<div class="a tbtn" style="left:275px;width:129px"><svg width="17" height="17"><rect x="4" y="1" width="9" height="5" rx="1" fill="#b7c8da" stroke="#1b6fa6" stroke-width="1.3"/><rect x="1" y="5" width="15" height="7.5" rx="1.5" fill="#b7c8da" stroke="#1b6fa6" stroke-width="1.3"/><rect x="4" y="9.5" width="9" height="6.5" rx="1" fill="#f4f6f8" stroke="#1b6fa6" stroke-width="1.3"/></svg>Scheda Magazzino</div>
<div class="a tbtn" style="left:414px;width:164px"><svg width="17" height="17"><rect x="4" y="1" width="9" height="5" rx="1" fill="#b7c8da" stroke="#1b6fa6" stroke-width="1.3"/><rect x="1" y="5" width="15" height="7.5" rx="1.5" fill="#b7c8da" stroke="#1b6fa6" stroke-width="1.3"/><rect x="4" y="9.5" width="9" height="6.5" rx="1" fill="#f4f6f8" stroke="#1b6fa6" stroke-width="1.3"/></svg>Articoli Ordinati da Clienti</div>
<div class="a tbtn" style="left:588px;width:167px"><svg width="17" height="17"><rect x="4" y="1" width="9" height="5" rx="1" fill="#b7c8da" stroke="#1b6fa6" stroke-width="1.3"/><rect x="1" y="5" width="15" height="7.5" rx="1.5" fill="#b7c8da" stroke="#1b6fa6" stroke-width="1.3"/><rect x="4" y="9.5" width="9" height="6.5" rx="1" fill="#f4f6f8" stroke="#1b6fa6" stroke-width="1.3"/></svg>Articoli Ordinati a Fornitori</div>
<div class="a tbtn" style="left:765px;width:104px"><svg width="17" height="17"><rect x="4" y="1" width="9" height="5" rx="1" fill="#b7c8da" stroke="#1b6fa6" stroke-width="1.3"/><rect x="1" y="5" width="15" height="7.5" rx="1.5" fill="#b7c8da" stroke="#1b6fa6" stroke-width="1.3"/><rect x="4" y="9.5" width="9" height="6.5" rx="1" fill="#f4f6f8" stroke="#1b6fa6" stroke-width="1.3"/></svg>Lista dei Lotti</div>
<div class="a tbtn" style="left:879px;width:156px"><svg width="17" height="17"><rect x="4" y="1" width="9" height="5" rx="1" fill="#b7c8da" stroke="#1b6fa6" stroke-width="1.3"/><rect x="1" y="5" width="15" height="7.5" rx="1.5" fill="#b7c8da" stroke="#1b6fa6" stroke-width="1.3"/><rect x="4" y="9.5" width="9" height="6.5" rx="1" fill="#f4f6f8" stroke="#1b6fa6" stroke-width="1.3"/></svg>Scheda Magazzino Terzi</div>
<svg class="a" style="left:1412px;top:104px" width="18" height="17"><rect x="1.5" y="0.75" width="15.5" height="15.5" rx="2" fill="#b7c8da" stroke="#1b6fa6" stroke-width="1.4"/><path d="M5,4.2 L13.5,12.7 M13.5,4.2 L5,12.7" stroke="#1b6fa6" stroke-width="1.3"/></svg>
<!-- FORM -->
<div class="a" style="left:265px;top:136px;width:2px;height:713px;background:#f7f7f7"></div>
<div class="a hdr" style="top:148px;background:#054f6d;border-radius:4px 4px 0 0">ARTICOLO MAGAZZINO</div>
<div id="box" class="a"></div>
<div class="a L" style="left:290px;top:193.53px;">Condivisione</div>
<div class="a pop" style="left:417px;top:189.5px;width:142px"><span class="a" style="left:8px;top:2.5px;font-size:13.5px;color:#a6a6a6;line-height:15px;-webkit-text-stroke:0.15px #a6a6a6">Tutte le aziende</span><svg class="a" style="left:126px;top:3.5px" width="10" height="13"><path d="M1.2,4.8 L5,1 L8.8,4.8 M1.2,8.2 L5,12 L8.8,8.2" fill="none" stroke="#9a9a9a" stroke-width="1.2"/></svg></div>
<div class="a L" style="left:290px;top:231.43px;">Tipo</div>
<div class="a pop" style="left:417px;top:227.5px;width:104px"><span class="a" style="left:8px;top:2.5px;font-size:13.5px;color:#a6a6a6;line-height:15px;-webkit-text-stroke:0.15px #a6a6a6">Standard</span><svg class="a" style="left:88px;top:3.5px" width="10" height="13"><path d="M1.2,4.8 L5,1 L8.8,4.8 M1.2,8.2 L5,12 L8.8,8.2" fill="none" stroke="#9a9a9a" stroke-width="1.2"/></svg></div>
<div class="a L" style="left:1271.5px;top:231.03px;">Obsoleto?</div>
<div class="a btn" style="left:1350px;top:227.5px;width:56px;height:21px;text-align:left;padding-left:8px;line-height:21px">No<svg class="a" style="left:38px;top:2.5px" width="16" height="16"><rect x="0" y="0" width="16" height="16" rx="3.5" fill="#1a7cf5"/><path d="M5,6.2 L8,3.5 L11,6.2 M5,9.8 L8,12.5 L11,9.8" fill="none" stroke="#fff" stroke-width="1.3"/></svg></div>
<svg class="a" style="left:1352px;top:256px" width="60" height="56"><path d="M24,8.3 L30.7,4.8 L53.7,16.3 L43,21.5 Z" fill="#cbcbcb" stroke="#f4f4f4" stroke-width="1.3" stroke-linejoin="round"/><path d="M7.3,18.2 L30,28.8 L30,52 L7.3,40.9 Z" fill="#cbcbcb" stroke="#f4f4f4" stroke-width="1.3" stroke-linejoin="round"/><path d="M32,29 L54.6,17.9 L54.6,40.6 L32,52 Z" fill="#cbcbcb" stroke="#f4f4f4" stroke-width="1.3" stroke-linejoin="round"/><path d="M8.3,16.6 L17.6,7.7 L40.9,18.9 L30.7,27.5 Z" fill="#cbcbcb" stroke="#f4f4f4" stroke-width="1.4" stroke-linejoin="round"/><text transform="translate(43.5,44) scale(0.8,1)" x="0" y="0" font-family="Liberation Sans" font-weight="bold" font-style="italic" font-size="22" fill="#f4f4f4" text-anchor="middle">?</text></svg>
<div class="a L" style="left:290px;top:267.53px;">Codice</div>
<div class="a fld" style="left:412px;top:265px;width:198px;height:19px"><span style="letter-spacing:0.6px">000008</span><svg class="a" style="left:180px;top:0px" width="17" height="17"><path d="M4.5,8 V5.5 Q4.5,1.5 8.5,1.5 Q12.5,1.5 12.5,5.5 V8" fill="none" stroke="#c8c8c8" stroke-width="1.2"/><rect x="2" y="8" width="13" height="8" rx="1" fill="none" stroke="#c8c8c8" stroke-width="1.2"/><path d="M8.5,11 V13" stroke="#c8c8c8" stroke-width="1.2"/></svg></div>
<div class="a btn" style="left:614px;top:264px;width:90px">Scansiona</div>
<div class="a L" style="left:290px;top:295.63px;">Descrizione</div>
<div class="a fld" style="left:412px;top:294px;width:800px;height:19px"><span style="letter-spacing:-0.54px">BRERA PLAFONIERA INCANDESCENTE</span><svg class="a" style="left:781px;top:0px" width="18" height="18"><path d="M1.5,1 V16.5" stroke="#1b6fa6" stroke-width="1.3"/><path d="M1.5,2 Q4,1.8 6.5,2.5 Q9,3.4 11.5,3.5 Q14,3.6 16,2.8 V12.5 Q14,13.8 11.5,13.2 Q9,12.6 6.5,12 Q4,11.4 1.5,12" fill="none" stroke="#1b6fa6" stroke-width="1.2" stroke-linejoin="round"/><path d="M6.5,2.5 V12 M11.5,3.5 V13.2" stroke="#1b6fa6" stroke-width="1.1"/></svg></div>
<div class="a L" style="left:290px;top:320.63px;">Codice alternativo</div>
<div class="a fld" style="left:412px;top:319px;width:198px;height:19px"><span style="letter-spacing:-0.38px">BLUIRE 36</span></div>
<div class="a L" style="left:290px;top:345.63px;">Cod art fornitore</div>
<div class="a fld" style="left:412px;top:344px;width:198px;height:19px"><span style="letter-spacing:-0.38px">BLUIRE 36</span></div>
<div class="a L" style="left:290px;top:370.63px;">Aliquota IVA</div>
<div class="a fld" style="left:412px;top:369px;width:98px;height:19px"><span>20</span><svg class="a" style="left:79px;top:0px" width="18" height="19"><rect x="6.5" y="1" width="10.5" height="10" rx="2.5" fill="none" stroke="#1b6fa6" stroke-width="1.2"/><rect x="1" y="7" width="11" height="10" rx="2.5" fill="none" stroke="#1b6fa6" stroke-width="1.2"/><path d="M12,9.6 V12.4" stroke="#fff" stroke-width="1.6"/><path d="M9.5,11 H14.5" stroke="#1b6fa6" stroke-width="1.2"/><path d="M6.5,5.6 V8.4" stroke="#fff" stroke-width="1.6"/><path d="M4,7 H9" stroke="#1b6fa6" stroke-width="1.2"/></svg></div>
<div class="a fld" style="left:516px;top:369px;width:696px;height:19px"><span>IVA 20%</span></div>
<div class="a L" style="left:290px;top:395.63px;">Categoria</div>
<div class="a fld" style="left:412px;top:394px;width:98px;height:19px"><span>03S1</span><svg class="a" style="left:79px;top:0px" width="18" height="19"><rect x="6.5" y="1" width="10.5" height="10" rx="2.5" fill="none" stroke="#1b6fa6" stroke-width="1.2"/><rect x="1" y="7" width="11" height="10" rx="2.5" fill="none" stroke="#1b6fa6" stroke-width="1.2"/><path d="M12,9.6 V12.4" stroke="#fff" stroke-width="1.6"/><path d="M9.5,11 H14.5" stroke="#1b6fa6" stroke-width="1.2"/><path d="M6.5,5.6 V8.4" stroke="#fff" stroke-width="1.6"/><path d="M4,7 H9" stroke="#1b6fa6" stroke-width="1.2"/></svg></div>
<div class="a fld" style="left:516px;top:394px;width:696px;height:19px"><span>Plaf.arred.incandesc</span></div>
<div class="a L" style="left:290px;top:420.63px;">Tipologia</div>
<div class="a fld" style="left:412px;top:419px;width:98px;height:19px"><span>LU</span><svg class="a" style="left:79px;top:0px" width="18" height="19"><rect x="6.5" y="1" width="10.5" height="10" rx="2.5" fill="none" stroke="#1b6fa6" stroke-width="1.2"/><rect x="1" y="7" width="11" height="10" rx="2.5" fill="none" stroke="#1b6fa6" stroke-width="1.2"/><path d="M12,9.6 V12.4" stroke="#fff" stroke-width="1.6"/><path d="M9.5,11 H14.5" stroke="#1b6fa6" stroke-width="1.2"/><path d="M6.5,5.6 V8.4" stroke="#fff" stroke-width="1.6"/><path d="M4,7 H9" stroke="#1b6fa6" stroke-width="1.2"/></svg></div>
<div class="a fld" style="left:516px;top:419px;width:696px;height:19px"><span>Linea Ufficio</span></div>
<div class="a L" style="left:290px;top:445.63px;">Unità di misura</div>
<div class="a fld" style="left:412px;top:444px;width:98px;height:19px"><span>PZ</span><svg class="a" style="left:79px;top:0px" width="18" height="19"><rect x="6.5" y="1" width="10.5" height="10" rx="2.5" fill="none" stroke="#1b6fa6" stroke-width="1.2"/><rect x="1" y="7" width="11" height="10" rx="2.5" fill="none" stroke="#1b6fa6" stroke-width="1.2"/><path d="M12,9.6 V12.4" stroke="#fff" stroke-width="1.6"/><path d="M9.5,11 H14.5" stroke="#1b6fa6" stroke-width="1.2"/><path d="M6.5,5.6 V8.4" stroke="#fff" stroke-width="1.6"/><path d="M4,7 H9" stroke="#1b6fa6" stroke-width="1.2"/></svg></div>
<div class="a fld" style="left:516px;top:444px;width:696px;height:19px"><span>Pz</span></div>
<div class="a L" style="left:290px;top:470.63px;">Produttore</div>
<div class="a fld" style="left:412px;top:469px;width:98px;height:19px"><svg class="a" style="left:79px;top:1px" width="18" height="17"><circle cx="7" cy="7" r="5.6" fill="none" stroke="#1b6fa6" stroke-width="1.3"/><path d="M11,11 L16,16" stroke="#1b6fa6" stroke-width="1.6"/></svg></div>
<div class="a fld" style="left:516px;top:469px;width:696px;height:19px"></div>
<div class="a L" style="left:290px;top:495.63px;">Fornitore</div>
<div class="a fld" style="left:412px;top:494px;width:98px;height:19px"><span>F00225</span><svg class="a" style="left:79px;top:0px" width="18" height="19"><rect x="6.5" y="1" width="10.5" height="10" rx="2.5" fill="none" stroke="#1b6fa6" stroke-width="1.2"/><rect x="1" y="7" width="11" height="10" rx="2.5" fill="none" stroke="#1b6fa6" stroke-width="1.2"/><path d="M12,9.6 V12.4" stroke="#fff" stroke-width="1.6"/><path d="M9.5,11 H14.5" stroke="#1b6fa6" stroke-width="1.2"/><path d="M6.5,5.6 V8.4" stroke="#fff" stroke-width="1.6"/><path d="M4,7 H9" stroke="#1b6fa6" stroke-width="1.2"/></svg></div>
<div class="a fld" style="left:516px;top:494px;width:696px;height:19px"><span style="letter-spacing:-0.53px">COLOMBO R. SRL</span></div>
<div class="a" style="left:289px;top:519px;width:1118px;height:1px;background:#c9c9c9"></div>
<div class="a L" style="left:290px;top:532.33px;">Catalogo</div>
<div class="a fld" style="left:412px;top:529px;width:148px;height:19px"><span class="r">232,41 €</span></div>
<div class="a L" style="left:290px;top:556.23px;">Acquisto</div>
<div class="a fld" style="left:412px;top:554px;width:148px;height:19px"><span class="r">232,41 €</span></div>
<div class="a L" style="left:290px;top:580.93px;">Vendita</div>
<div class="a fld" style="left:412px;top:579px;width:148px;height:19px"><span class="r">302,13 €</span></div>
<div class="a L" style="left:290px;top:604.63px;">IVA inclusa</div>
<div class="a fld" style="left:412px;top:604px;width:148px;height:19px"><span class="r">362,56 €</span></div>
<div class="a L" style="left:573px;top:529.83px;">Sconto</div>
<div class="a fld" style="left:712px;top:529px;width:109px;height:19px"></div>
<div class="a L" style="left:573px;top:554.83px;">In data</div>
<div class="a fld" style="left:712px;top:554px;width:109px;height:19px"><svg class="a" style="left:90px;top:0px" width="18" height="18"><rect x="1" y="3" width="15.5" height="13.5" rx="1.5" fill="none" stroke="#1b6fa6" stroke-width="1.2"/><path d="M1,6.5 H16.5 M5,1 V4.5 M12.5,1 V4.5" stroke="#1b6fa6" stroke-width="1.2"/><path d="M5,9 h1.6 M8,9 h1.6 M11,9 h1.6 M5,11.5 h1.6 M8,11.5 h1.6 M11,11.5 h1.6 M5,14 h1.6 M8,14 h1.6" stroke="#1b6fa6" stroke-width="1.1"/></svg></div>
<div class="a L" style="left:573px;top:579.83px;">Sconto promozionale</div>
<div class="a fld" style="left:712px;top:579px;width:109px;height:19px"></div>
<div class="a L" style="left:834px;top:555.73px;">% Margine</div>
<div class="a fld" style="left:914px;top:554px;width:109px;height:19px"><span>30</span></div>
<div class="a L" style="left:834px;top:580.73px;">Netto</div>
<div class="a fld" style="left:914px;top:579px;width:117px;height:19px"><span class="r">302,13 €</span></div>
<div class="a btn" style="left:1078px;top:532.5px;width:118.5px;height:20.5px">Griglia prezzi...</div>
<div class="a btn" style="left:1078px;top:596.5px;width:107.5px;height:20.5px">Collegamenti</div>
<svg class="a" style="z-index:5;left:1411px;top:157px" width="12" height="7"><path d="M1,6.2 L6,0.8 L11,6.2 Z" fill="#fff"/></svg>
<svg class="a" style="z-index:5;left:1411px;top:660px" width="12" height="7"><path d="M1,0.8 L6,6.2 L11,0.8 Z" fill="#fff"/></svg>
<div class="a hdr" style="top:652px;background:#0778a5;border-radius:4px">EXTRA</div>
<!-- STATUS -->
<div id="status" class="a"><svg class="a" style="left:5px;top:5px" width="18" height="18"><path d="M3.2,5.5 A7,7 0 1 1 2,9.5" fill="none" stroke="#1b6fa6" stroke-width="1.4"/><path d="M1.5,1.5 V6 H6" fill="none" stroke="#1b6fa6" stroke-width="1.4"/><path d="M5.5,9.5 L8.2,12 L12.5,7" fill="none" stroke="#1b6fa6" stroke-width="1.3"/></svg>
<svg class="a" style="left:25px;top:5px" width="18" height="18"><path d="M14.8,5.5 A7,7 0 1 0 16,9.5" fill="none" stroke="#a8a8a8" stroke-width="1.4"/><path d="M16.5,1.5 V6 H12" fill="none" stroke="#a8a8a8" stroke-width="1.4"/><path d="M5.5,9 L9,12 L12.5,9" fill="none" stroke="#a8a8a8" stroke-width="1.3"/></svg>
<svg class="a" style="left:45px;top:5px" width="18" height="18"><path d="M2.5,7 A7,7 0 0 1 15,5 M15.5,11 A7,7 0 0 1 3,13" fill="none" stroke="#1b6fa6" stroke-width="1.5"/><path d="M15.5,1 V5.5 H11 M2.5,17 V12.5 H7" fill="none" stroke="#1b6fa6" stroke-width="1.5"/><path d="M5.5,7.5 H12.5 L9,12 Z" fill="#1b6fa6"/></svg>
<div class="t" style="left:68px;letter-spacing:0.2px">Articoli — 000008</div>
<div class="t" style="left:374px;font-size:11.6px">Amministratore</div>
<div class="t" style="left:643px;font-size:11.6px">Prova</div>
<div class="t" style="left:1310px;font-size:11.6px">01/01/2024 - 31/12/2024</div></div>
<!-- red circles -->
<svg class="a" style="left:0;top:0" width="1440" height="876"><circle cx="1414" cy="162.8" r="35.3" fill="none" stroke="#ff0016" stroke-width="5"/><circle cx="1414" cy="664" r="35.3" fill="none" stroke="#ff0016" stroke-width="5"/></svg>
</div>
</body></html>
